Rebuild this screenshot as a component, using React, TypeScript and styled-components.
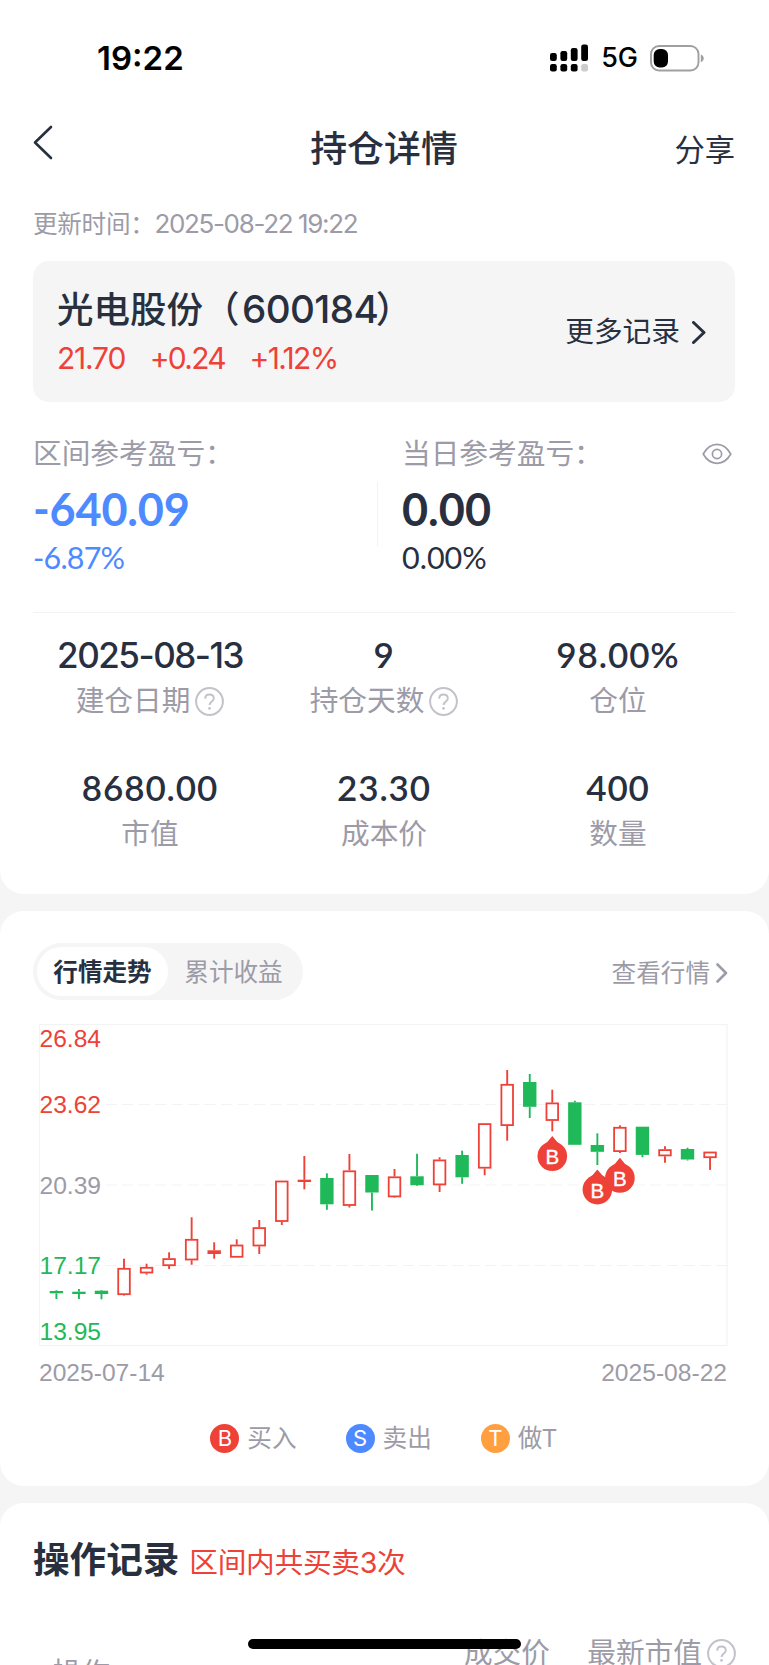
import React from "react";
import styled, { createGlobalStyle } from "styled-components";

const ink = "#28303f";
const muted = "#9c9ba7";
const red = "#ee4137";
const green = "#1fb959";
const blue = "#4e8aff";
const orange = "#ff9f40";
const line = "#f3f3f4";

const GlobalStyle = createGlobalStyle`
  * { box-sizing: border-box; }
  html, body { margin: 0; height: 1665px; overflow: hidden; }
  body {
    background: #f5f5f5;
    color: ${ink};
    font-family: Inter, "Noto Sans CJK SC", sans-serif;
    -webkit-font-smoothing: antialiased;
  }
`;

const Screen = styled.div`
  position: relative;
  width: 769px;
  height: 1665px;
  overflow: hidden;
  display: flex;
  flex-direction: column;
  gap: 17px;
`;

const Panel = styled.section<{ $h: number; $first?: boolean }>`
  flex: none;
  height: ${(p) => p.$h}px;
  padding: 0 34px 0 33px;
  background: #fff;
  border-radius: ${(p) => (p.$first ? "0 0 24px 24px" : "24px")};
  display: flex;
  flex-direction: column;

  > * {
    flex-shrink: 0;
  }
`;

const Label = styled.span<{ $size: number; $lh?: number; $weight?: number; $color?: string; $ls?: number }>`
  font-size: ${(p) => p.$size}px;
  line-height: ${(p) => p.$lh ?? 36}px;
  font-weight: ${(p) => p.$weight ?? 400};
  color: ${(p) => p.$color ?? ink};
  letter-spacing: ${(p) => p.$ls ?? 0}px;
  white-space: pre;
`;

const Figure = styled(Label)`
  font-family: Lato, Inter, sans-serif;
`;

const StockCode = styled.span`
  margin: 0 -2.5px 0 2.5px;
  font-size: 38.6px;
  letter-spacing: -0.6px;
`;

const StatusBar = styled.div`
  height: 116px;
  display: flex;
  align-items: center;
  padding: 0 31px 0 64px;
`;

const StatusIcons = styled.div`
  margin-left: auto;
  display: flex;
  align-items: center;
  gap: 12px;
`;

const NavBar = styled.header`
  height: 66px;
  display: grid;
  grid-template-columns: 1fr auto 1fr;
  align-items: center;
`;

const BackIcon = styled.svg`
  margin-top: -13px;
`;

const ShareButton = styled.button`
  justify-self: end;
  padding: 0;
  margin-top: 2px;
  border: 0;
  background: none;
  font: 400 30.3px/36px Inter, "Noto Sans CJK SC", sans-serif;
  color: ${ink};
`;

const UpdateTime = styled.div`
  height: 79px;
  padding-top: 22px;
  display: flex;
  align-items: flex-start;
`;

const StockCard = styled.div`
  height: 141px;
  padding: 0 29px 1px 24px;
  border-radius: 16px;
  background: #f5f5f5;
  display: flex;
  justify-content: space-between;
  align-items: center;
`;

const StockInfo = styled.div`
  display: flex;
  flex-direction: column;
  gap: 9px;
`;

const Quote = styled.div`
  display: flex;
  gap: 24.5px;
  line-height: 34px;
`;

const MoreLink = styled.div`
  display: flex;
  align-items: center;
  gap: 12px;
  padding-top: 2px;
`;

const ProfitRow = styled.div`
  height: 211px;
  display: flex;
  border-bottom: 1.5px solid ${line};
`;

const Profit = styled.div<{ $width?: number }>`
  flex: ${(p) => (p.$width ? `none` : "1")};
  width: ${(p) => (p.$width ? `${p.$width}px` : "auto")};
  display: flex;
  flex-direction: column;
  padding-top: 34px;
`;

const ProfitHead = styled.div`
  display: flex;
  align-items: center;
  justify-content: space-between;
  padding-right: 3px;
`;

const Divider = styled.div`
  width: 1px;
  height: 65px;
  margin: 80px 24px 0 0;
  background: ${line};
`;

const Stats = styled.div`
  display: grid;
  grid-template-columns: repeat(3, 1fr);
  grid-auto-rows: 133px;
  padding-top: 22px;
`;

const Stat = styled.div`
  display: flex;
  flex-direction: column;
  align-items: center;
`;

const StatValue = styled.div<{ $raise: number }>`
  display: flex;
  margin-top: ${(p) => -p.$raise}px;
  padding-bottom: ${(p) => p.$raise}px;
`;

const StatName = styled.div`
  display: flex;
  align-items: center;
  gap: 5px;
  margin-top: 8px;
`;

const TabRow = styled.div`
  height: 57px;
  margin-top: 32px;
  display: flex;
  justify-content: space-between;
  align-items: center;
`;

const Tabs = styled.div`
  width: 270px;
  height: 57px;
  padding: 4px;
  border-radius: 29px;
  background: #f5f5f5;
  display: flex;
`;

const Tab = styled.div<{ $active?: boolean }>`
  width: 131px;
  height: 49px;
  border-radius: 25px;
  background: ${(p) => (p.$active ? "#fff" : "transparent")};
  color: ${(p) => (p.$active ? ink : muted)};
  font-weight: ${(p) => (p.$active ? 700 : 400)};
  font-size: 24.6px;
  line-height: 51px;
  text-align: center;
`;

const QuoteLink = styled.div`
  display: flex;
  align-items: center;
  gap: 6px;
  padding: 3px 7px 0 0;
`;

const Chart = styled.svg`
  display: block;
  margin-left: -33px;
  font-family: "Liberation Sans", Arial, sans-serif;
  font-size: 24.6px;
`;

const Legend = styled.div`
  display: flex;
  justify-content: center;
  align-items: center;
  gap: 49px;
  height: 36px;
  margin-top: 20px;
  padding-right: 1px;
`;

const LegendItem = styled.div`
  display: flex;
  align-items: center;
  gap: 8px;
`;

const Dot = styled.span<{ $color: string }>`
  width: 29px;
  height: 29px;
  border-radius: 50%;
  background: ${(p) => p.$color};
  color: #fff;
  font-size: 22px;
  line-height: 29px;
  text-align: center;
`;

const RecordHead = styled.div`
  display: flex;
  align-items: center;
  gap: 10px;
  padding-top: 35px;
`;

const RecordNote = styled(Label)`
  padding-top: 5px;
`;

const RecordColumns = styled.div`
  display: flex;
  align-items: flex-start;
  margin-top: 53px;
`;

const ColumnName = styled.div<{ $width: number; $drop?: number }>`
  width: ${(p) => p.$width}px;
  flex: none;
  padding-top: ${(p) => p.$drop ?? 0}px;
  display: flex;
  justify-content: flex-end;
  align-items: center;
  gap: 5px;
`;

const HomeIndicator = styled.div`
  position: absolute;
  left: 248px;
  top: 1639px;
  width: 273px;
  height: 10px;
  border-radius: 5px;
  background: #000;
`;

const HelpIcon = () => (
  <svg width="29" height="29" viewBox="0 0 29 29" fill="none" stroke="#c3c2ca">
    <circle cx="14.5" cy="14.5" r="13.4" strokeWidth="2" />
    <path d="M10.2 11.8c0-2.6 1.8-4.3 4.3-4.3s4.3 1.6 4.3 3.9c0 3-4.2 3.4-4.2 6.6" strokeWidth="1.9" />
    <circle cx="14.5" cy="21.4" r="1.3" fill="#c3c2ca" stroke="none" />
  </svg>
);

const Chevron = ({ w, h, color, stroke }: { w: number; h: number; color: string; stroke: number }) => (
  <svg width={w} height={h} viewBox={`0 0 ${w} ${h}`} fill="none">
    <path d={`M1.5 1.5L${w - 2} ${h / 2}L1.5 ${h - 1.5}`} stroke={color} strokeWidth={stroke} strokeLinecap="round" strokeLinejoin="round" />
  </svg>
);

const EyeIcon = () => (
  <svg width="30" height="22" viewBox="0 0 30 22" fill="none" stroke={muted} strokeWidth="1.7">
    <path d="M1.2 11C4.6 5 9.3 1.4 15 1.4S25.4 5 28.8 11C25.4 17 20.7 20.3 15 20.3S4.6 17 1.2 11Z" strokeLinejoin="round" />
    <circle cx="15" cy="11" r="4.6" />
  </svg>
);

const SignalIcon = () => (
  <svg width="39" height="28" viewBox="0 0 39 28">
    {[[0, 9, 8], [10.4, 7, 10], [20.8, 4, 13], [31.2, 0.5, 16.5]].map(([x, y, h]) => (
      <rect key={x} x={x} y={y} width="6.8" height={h} rx="2.2" />
    ))}
    {[0, 10.4, 20.8, 31.2].map((x, i) => (
      <rect key={x} x={x} y="20" width="6.8" height="7.5" rx="2.2" fill={i === 3 ? "#ccc" : "#000"} />
    ))}
  </svg>
);

const BatteryIcon = () => (
  <svg width="54" height="27" viewBox="0 0 54 27" fill="none">
    <rect x="1" y="1" width="47.5" height="24.5" rx="8" stroke="#a0a0a0" strokeWidth="1.9" />
    <rect x="3.7" y="4" width="14.3" height="18.5" rx="6" fill="#000" />
    <path d="M50.8 9.5c2.2.9 2.9 2.2 2.9 3.8s-.7 3-2.9 3.9z" fill="#a0a0a0" />
  </svg>
);

// rising?, high, body top, body bottom, low
type Candle = [boolean, number, number, number, number];
const candles: Candle[] = [
  [false, 1290.3, 1291, 1293.3, 1299],
  [false, 1289, 1291.7, 1294, 1299],
  [false, 1290, 1290.7, 1294, 1299.3],
  [true, 1258.7, 1268, 1295, 1295.5],
  [true, 1263.7, 1267, 1273.3, 1274.7],
  [true, 1252.3, 1258.3, 1266, 1269],
  [true, 1217.3, 1239, 1260.3, 1264.7],
  [true, 1242.3, 1250.3, 1254, 1258.7],
  [true, 1239.3, 1244.7, 1257.6, 1257.6],
  [true, 1220, 1227.3, 1246.3, 1254],
  [true, 1180.7, 1180.7, 1221.8, 1225],
  [true, 1156, 1179.7, 1182, 1189.3],
  [false, 1173.3, 1178, 1204.3, 1209.8],
  [true, 1154, 1170.5, 1205.8, 1207.5],
  [false, 1175, 1175, 1192.5, 1210.5],
  [true, 1169, 1176.5, 1197.2, 1197.8],
  [false, 1153.7, 1176.3, 1185.2, 1186],
  [true, 1157.3, 1159.6, 1185.2, 1192],
  [false, 1150.7, 1155, 1177.3, 1183.8],
  [true, 1123.3, 1123.3, 1168.5, 1175.3],
  [true, 1070, 1084, 1125.9, 1140.7],
  [false, 1074, 1082, 1106.8, 1118],
  [true, 1089.7, 1102.6, 1120.8, 1131.3],
  [false, 1100.7, 1102.3, 1144.8, 1144.8],
  [false, 1133.3, 1145, 1151.8, 1165],
  [true, 1125.3, 1127, 1151.9, 1153],
  [false, 1126.7, 1126.7, 1154.9, 1157.3],
  [true, 1146.3, 1149.3, 1156.2, 1162.7],
  [false, 1147.7, 1149, 1159.5, 1160.5],
  [true, 1151.7, 1151.7, 1158, 1169.9],
];
const candleX = (i: number) => 56.4 + i * 22.54;

const buys = [
  { i: 22, y: 1156.3 },
  { i: 24, y: 1189.6 },
  { i: 25, y: 1178 },
];

const axis = [
  { v: "26.84", y: 1047, c: red },
  { v: "23.62", y: 1113, c: red },
  { v: "20.39", y: 1194, c: muted },
  { v: "17.17", y: 1274, c: green },
  { v: "13.95", y: 1340, c: green },
];

const CandleShape = ({ c, x }: { c: Candle; x: number }) => {
  const [up, high, top, bottom, low] = c;
  const color = up ? red : green;
  const hollow = up && bottom - top > 4;
  return (
    <g stroke={color} strokeWidth="1.9">
      {high < top && <line x1={x} x2={x} y1={high} y2={top} />}
      {low > bottom && <line x1={x} x2={x} y1={bottom} y2={low} />}
      {hollow ? (
        <rect x={x - 5.8} y={top + 0.8} width="11.6" height={bottom - top - 1.6} fill="#fff" strokeWidth="1.8" />
      ) : (
        <rect x={x - 6.7} y={top} width="13.4" height={bottom - top} fill={color} stroke="none" />
      )}
    </g>
  );
};

const PriceChart = () => (
  <Chart width="769" height="400" viewBox="0 1000 769 400">
    <g fill="none" stroke={line}>
      <rect x="39.5" y="1024.5" width="687.5" height="321" strokeWidth="1.2" />
      {[1104.5, 1185, 1265.5].map((y) => (
        <line key={y} x1="39.5" x2="727" y1={y} y2={y} strokeDasharray="11.3 5.2" strokeWidth="1.2" />
      ))}
    </g>
    {axis.map((a) => (
      <text key={a.v} x="39.5" y={a.y} fill={a.c}>{a.v}</text>
    ))}
    {candles.map((c, i) => (
      <CandleShape key={i} c={c} x={candleX(i)} />
    ))}
    {buys.map(({ i, y }) => {
      const x = candleX(i);
      return (
        <g key={i}>
          <circle cx={x} cy={y} r="14.8" fill={red} />
          <path d={`M${x - 6} ${y - 13}L${x} ${y - 20.2}L${x + 6} ${y - 13}Z`} fill={red} />
          <text x={x} y={y + 8} textAnchor="middle" fontSize="20.5" fill="#fff" stroke="#fff" strokeWidth="0.4">B</text>
        </g>
      );
    })}
    <text x="39" y="1380.6" fill={muted}>2025-07-14</text>
    <text x="727" y="1380.6" fill={muted} textAnchor="end">2025-08-22</text>
  </Chart>
);

const stats = [
  { v: "2025-08-13", n: "建仓日期", help: true, ls: -1.5 },
  { v: "9", n: "持仓天数", help: true },
  { v: "98.00%", n: "仓位" },
  { v: "8680.00", n: "市值" },
  { v: "23.30", n: "成本价" },
  { v: "400", n: "数量" },
];

export default function App() {
  return (
    <Screen>
      <GlobalStyle />
      <Panel $h={894} $first>
        <StatusBar>
          <Label $size={33} $weight={600} $color="#000">19:22</Label>
          <StatusIcons>
            <SignalIcon />
            <Label $size={27} $weight={500} $color="#000">5G</Label>
            <BatteryIcon />
          </StatusIcons>
        </StatusBar>
        <NavBar>
          <BackIcon width="20" height="35" viewBox="0 0 20 35" fill="none" stroke={ink} strokeWidth="2.6" strokeLinecap="round" strokeLinejoin="round">
            <path d="M18 2L2 17.5L18 33" />
          </BackIcon>
          <Label $size={36.9} $lh={44} $weight={500}>持仓详情</Label>
          <ShareButton>分享</ShareButton>
        </NavBar>
        <UpdateTime>
          <Label $size={24.6} $lh={40} $color={muted} $ls={-0.3}>更新时间：</Label>
          <Label $size={26} $lh={40} $color={muted} $ls={-1.35}>2025-08-22 19:22</Label>
        </UpdateTime>
        <StockCard>
          <StockInfo>
            <Label $size={36.5} $lh={44} $weight={500}>光电股份（<StockCode>600184</StockCode>）</Label>
            <Quote>
              <Label $size={30} $lh={34} $color={red} $ls={-1.2}>21.70</Label>
              <Label $size={30} $lh={34} $color={red} $ls={-1.7}>+0.24</Label>
              <Label $size={30} $lh={34} $color={red} $ls={-1.7}>+1.12%</Label>
            </Quote>
          </StockInfo>
          <MoreLink>
            <Label $size={28.7}>更多记录</Label>
            <Chevron w={14} h={23} color={ink} stroke={3} />
          </MoreLink>
        </StockCard>
        <ProfitRow>
          <Profit $width={344}>
            <Label $size={28.7} $color={muted}>区间参考盈亏：</Label>
            <Figure $size={45} $lh={75} $weight={700} $color={blue} $ls={-0.2}>-640.09</Figure>
            <Figure $size={30.5} $lh={20} $color={blue} $ls={-0.8}>-6.87%</Figure>
          </Profit>
          <Divider />
          <Profit>
            <ProfitHead>
              <Label $size={28.7} $color={muted}>当日参考盈亏：</Label>
              <EyeIcon />
            </ProfitHead>
            <Figure $size={45} $lh={75} $weight={700}>0.00</Figure>
            <Figure $size={30.5} $lh={20}>0.00%</Figure>
          </Profit>
        </ProfitRow>
        <Stats>
          {stats.map((s) => {
            const Value = s.ls ? Label : Figure;
            return (
              <Stat key={s.n}>
                <StatValue $raise={s.ls ? 0 : 1}>
                  <Value $size={35} $lh={40} $weight={s.ls ? 500 : 600} $ls={s.ls ?? 0.9}>{s.v}</Value>
                </StatValue>
                <StatName>
                  <Label $size={28.7} $color={muted}>{s.n}</Label>
                  {s.help && <HelpIcon />}
                </StatName>
              </Stat>
            );
          })}
        </Stats>
      </Panel>
      <Panel $h={575}>
        <TabRow>
          <Tabs>
            <Tab $active>行情走势</Tab>
            <Tab>累计收益</Tab>
          </Tabs>
          <QuoteLink>
            <Label $size={24.6} $color={muted}>查看行情</Label>
            <Chevron w={12} h={20} color={muted} stroke={2.6} />
          </QuoteLink>
        </TabRow>
        <PriceChart />
        <Legend>
          <LegendItem><Dot $color={red}>B</Dot><Label $size={24.6} $color={muted}>买入</Label></LegendItem>
          <LegendItem><Dot $color={blue}>S</Dot><Label $size={24.6} $color={muted}>卖出</Label></LegendItem>
          <LegendItem><Dot $color={orange}>T</Dot><Label $size={24.6} $color={muted} $ls={-0.8}>做T</Label></LegendItem>
        </Legend>
      </Panel>
      <Panel $h={260}>
        <RecordHead>
          <Label $size={36.6} $lh={44} $weight={700}>操作记录</Label>
          <RecordNote $size={28.7} $color={red} $ls={-0.3}>区间内共买卖3次</RecordNote>
        </RecordHead>
        <RecordColumns>
          <ColumnName $width={77} $drop={20}><Label $size={28.7} $color={muted}>操作</Label></ColumnName>
          <ColumnName $width={440}><Label $size={28.7} $color={muted}>成交价</Label></ColumnName>
          <ColumnName $width={186}><Label $size={28.7} $color={muted}>最新市值</Label><HelpIcon /></ColumnName>
        </RecordColumns>
      </Panel>
      <HomeIndicator />
    </Screen>
  );
}
